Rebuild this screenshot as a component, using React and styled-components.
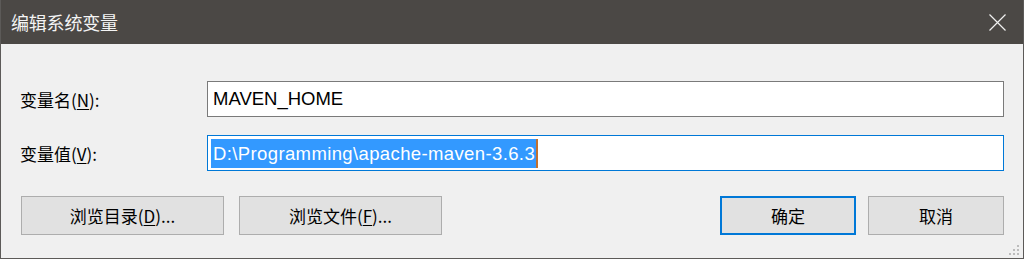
import React from "react";
import styled, { createGlobalStyle } from "styled-components";

const GlobalStyle = createGlobalStyle`
  html, body {
    margin: 0;
    padding: 0;
    background: #f0f0f0;
  }
  body {
    font-family: "Noto Sans", "Noto Sans CJK SC", sans-serif;
  }
`;

const Window = styled.div`
  width: 1024px;
  height: 259px;
  box-sizing: border-box;
  border: 1px solid #5c5a58;
  border-top: none;
  background: #f0f0f0;
  display: flex;
  flex-direction: column;
  position: relative;
  overflow: hidden;
`;

const TitleBar = styled.div`
  height: 44px;
  flex: none;
  background: #4b4845;
  display: flex;
  align-items: center;
  justify-content: space-between;
  padding: 0 9px 0 11px;
  box-sizing: border-box;
  margin: 0 -1px;
`;

const Title = styled.span`
  color: #f4f4f4;
  font-size: 18px;
  font-family: "Noto Sans CJK SC", sans-serif;
  letter-spacing: -0.2px;
`;

const CloseButton = styled.button`
  width: 36px;
  height: 36px;
  border: none;
  background: transparent;
  padding: 0;
  display: flex;
  align-items: center;
  justify-content: center;
`;

const Body = styled.div`
  flex: 1;
  padding: 37px 19px 0 19px;
  display: flex;
  flex-direction: column;
`;

const Form = styled.div`
  display: grid;
  grid-template-columns: 187px 1fr;
  row-gap: 18px;
  align-items: center;
`;

const Label = styled.label`
  font-size: 17px;
  color: #000;
  font-family: "Noto Sans CJK SC", sans-serif;
  line-height: 1;
  u {
    text-decoration: underline;
    text-underline-offset: 2px;
  }
`;

const Field = styled.div`
  height: 36px;
  box-sizing: border-box;
  border: 1px solid ${(p) => (p.$focused ? "#0078d7" : "#7a7a7a")};
  background: #fff;
  display: flex;
  align-items: center;
  padding: 0 0 0 3px;
  font-size: 18.5px;
  font-family: "Liberation Sans", "Noto Sans", sans-serif;
  color: #000;
`;

const FieldText = styled.span`
  padding-left: 2px;
`;

const Selected = styled.span`
  background: #3399ff;
  color: #fff;
  line-height: 29px;
  letter-spacing: 0.38px;
  padding: 0 1px 0 2px;
  border-right: 2px solid #c07030;
`;

const ButtonRow = styled.div`
  margin-top: 25px;
  display: flex;
  align-items: center;
  padding-left: 1px;
`;

const Group = styled.div`
  display: flex;
  gap: ${(p) => p.$gap}px;
`;

const Spacer = styled.div`
  flex: 1;
`;

const Button = styled.button`
  width: ${(p) => p.$w}px;
  height: 39px;
  box-sizing: border-box;
  background: #e1e1e1;
  border: ${(p) => (p.$default ? "2px solid #0078d7" : "1px solid #adadad")};
  font-size: 17px;
  font-family: "Noto Sans CJK SC", sans-serif;
  color: #000;
  padding: 0;
  display: flex;
  align-items: center;
  justify-content: center;
  u {
    text-decoration: underline;
    text-underline-offset: 2px;
  }
`;

const Grip = styled.svg`
  position: absolute;
  right: 3px;
  bottom: 2px;
`;

export default function App() {
  return (
    <>
      <GlobalStyle />
      <Window>
        <TitleBar>
          <Title>编辑系统变量</Title>
          <CloseButton aria-label="关闭">
            <svg width="17" height="17" viewBox="0 0 17 17">
              <path d="M0.5 0.5 L16.5 16.5 M16.5 0.5 L0.5 16.5" stroke="#f0f0f0" strokeWidth="1.2" />
            </svg>
          </CloseButton>
        </TitleBar>
        <Body>
          <Form>
            <Label>
              变量名(<u>N</u>):
            </Label>
            <Field>
              <FieldText>MAVEN_HOME</FieldText>
            </Field>
            <Label>
              变量值(<u>V</u>):
            </Label>
            <Field $focused>
              <Selected>D:\Programming\apache-maven-3.6.3</Selected>
            </Field>
          </Form>
          <ButtonRow>
            <Group $gap={15}>
              <Button $w={203}>
                浏览目录(<u>D</u>)...
              </Button>
              <Button $w={203}>
                浏览文件(<u>F</u>)...
              </Button>
            </Group>
            <Spacer />
            <Group $gap={12}>
              <Button $w={136} $default>
                确定
              </Button>
              <Button $w={136}>取消</Button>
            </Group>
          </ButtonRow>
        </Body>
        <Grip width="12" height="12" viewBox="0 0 12 12">
          <rect x="9" y="1" width="2" height="2" fill="#bcbcbc" />
          <rect x="5" y="5" width="2" height="2" fill="#bcbcbc" />
          <rect x="9" y="5" width="2" height="2" fill="#bcbcbc" />
          <rect x="1" y="9" width="2" height="2" fill="#bcbcbc" />
          <rect x="5" y="9" width="2" height="2" fill="#bcbcbc" />
          <rect x="9" y="9" width="2" height="2" fill="#bcbcbc" />
        </Grip>
      </Window>
    </>
  );
}
